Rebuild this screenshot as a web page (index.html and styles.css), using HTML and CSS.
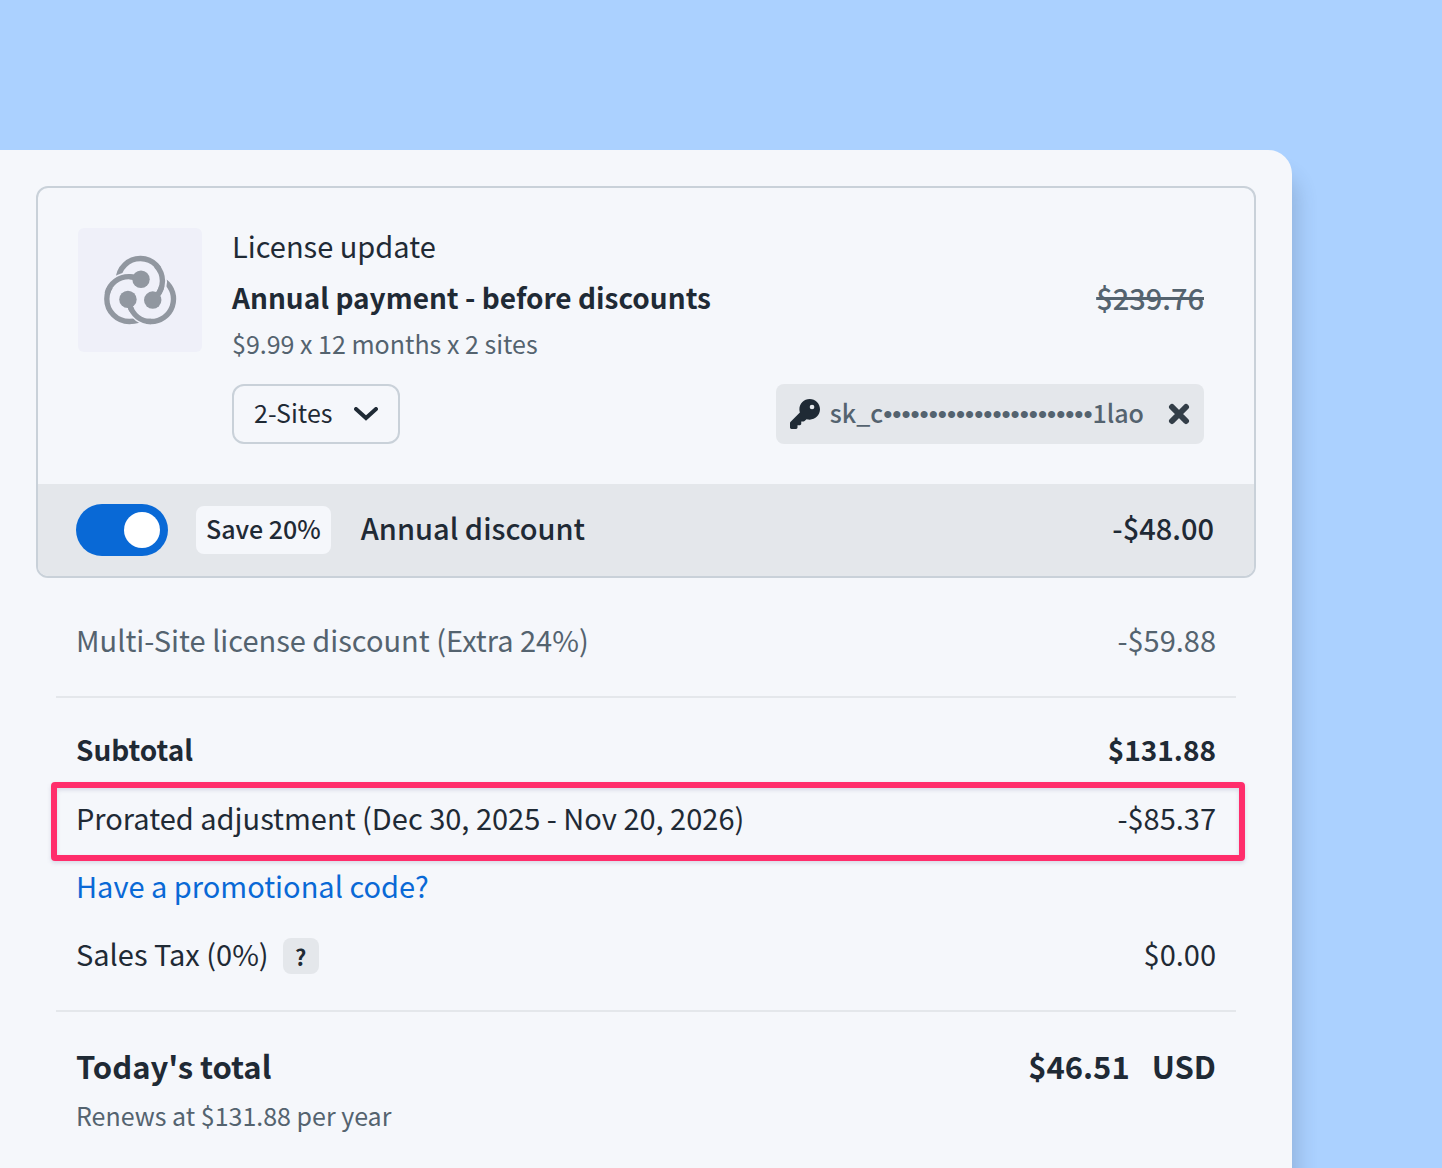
FILE: index.html
```html
<!DOCTYPE html>
<html lang="en">
<head>
  <meta charset="UTF-8">
  <meta name="viewport" content="width=device-width, initial-scale=1.0">
  <title>License update</title>
  <link rel="stylesheet" href="styles.css">
</head>
<body>
  <main class="panel">
    <section class="card">
      <div class="product">
        <svg class="logo" viewBox="25 25 370 370" aria-hidden="true">
          <g class="logo-ring">
            <path d="M145 181 A66 66 0 0 1 277 183 Q276 210 260 228"/>
            <path d="M205 178 Q192 170 178 170 A67 67 0 0 0 178 304 Q194 304 206 300"/>
            <path d="M179 255 C188 285 212 304 243 304 A67 67 0 0 0 284 184"/>
          </g>
          <!-- gaps where the rings cross -->
          <g class="logo-gap">
            <path d="M122 200 A67 67 0 0 1 178 170"/>
            <path d="M266 147 A66 66 0 0 1 276 198"/>
            <path d="M186 270 Q203 297 230 303"/>
          </g>
          <g class="logo-ring">
            <path d="M112 220 A67 67 0 0 1 178 170 Q192 170 205 178"/>
            <path d="M258 137 A66 66 0 0 1 277 183 Q276 210 260 228"/>
            <path d="M179 255 C188 285 212 304 243 304"/>
          </g>
          <g class="logo-dots">
            <circle cx="213" cy="178" r="26"/>
            <circle cx="174" cy="238" r="26"/>
            <circle cx="248" cy="240" r="26"/>
          </g>
        </svg>
        <div class="details">
          <p class="product-name">License update</p>
          <div class="price-row">
            <h2>Annual payment - before discounts</h2>
            <s>$239.76</s>
          </div>
          <p class="note">$9.99 x 12 months x 2 sites</p>
          <div class="controls">
            <div class="select">
              <select aria-label="Number of sites">
                <option>2-Sites</option>
              </select>
              <svg class="chevron" viewBox="0 0 24 14" aria-hidden="true"><path d="M2 2 L12 11 L22 2"/></svg>
            </div>
            <div class="license-key">
              <svg class="key-icon" viewBox="0 0 512 512" aria-hidden="true"><path d="M336 352c97.200 0 176-78.800 176-176S433.200 0 336 0S160 78.800 160 176c0 18.700 2.900 36.800 8.300 53.700L7 391c-4.500 4.500-7 10.600-7 17v80c0 13.300 10.700 24 24 24h80c13.300 0 24-10.700 24-24V448h40c13.300 0 24-10.700 24-24V384h40c6.400 0 12.500-2.500 17-7l33.300-33.300c16.900 5.400 35 8.300 53.700 8.300zM376 96a40 40 0 1 1 0 80 40 40 0 1 1 0-80z"/></svg>
              <span class="key-text">sk_c<span class="mask">•••••••••••••••••••••••</span>1lao</span>
              <button type="button" class="remove" aria-label="Remove license key">
                <svg viewBox="0 0 22 22" aria-hidden="true"><path d="M4 4 L18 18 M18 4 L4 18"/></svg>
              </button>
            </div>
          </div>
        </div>
      </div>
      <div class="discount">
        <input type="checkbox" class="toggle" id="annual" checked>
        <span class="badge">Save 20%</span>
        <label for="annual">Annual discount</label>
        <span class="amount">-$48.00</span>
      </div>
    </section>

    <section class="summary">
      <div class="row muted"><span>Multi-Site license discount (Extra 24%)</span><span>-$59.88</span></div>
      <hr>
      <div class="row strong"><span>Subtotal</span><span>$131.88</span></div>
      <div class="row highlight"><span>Prorated adjustment (Dec 30, 2025 - Nov 20, 2026)</span><span>-$85.37</span></div>
      <div class="row"><a href="#promo">Have a promotional code?</a></div>
      <div class="row">
        <span class="tax">Sales Tax (0%) <button type="button" class="help" aria-label="About sales tax">?</button></span>
        <span>$0.00</span>
      </div>
      <hr>
      <div class="row total">
        <span>Today's total</span>
        <span class="total-amount"><span>$46.51</span><span>USD</span></span>
      </div>
      <p class="note renews">Renews at $131.88 per year</p>
    </section>
  </main>
</body>
</html>
```
FILE: styles.css
```css
* {
  box-sizing: border-box;
}
body {
  margin: 0;
  padding-top: 150px;
  min-height: 100vh;
  display: flex;
  background: #abd1ff;
  color: #1f2a35;
  font-family: "Noto Sans CJK SC", "Noto Sans", sans-serif;
  font-size: 29px;
  line-height: 40px;
  overflow: hidden;
}
h2, p {
  margin: 0;
  font-size: inherit;
}
.panel {
  flex: 1;
  margin-right: 150px;
  padding: 36px 36px 24px;
  background: #f5f7fb;
  border-top-right-radius: 24px;
  box-shadow: 6px 24px 20px rgba(50, 65, 90, 0.2);
}
.card {
  border: 2px solid #c9d1d9;
  border-radius: 12px;
  overflow: hidden;
}
.product {
  display: flex;
  align-items: flex-start;
  gap: 30px;
  padding: 40px 50px 40px 40px;
}
.logo {
  width: 124px;
  height: 124px;
  flex-shrink: 0;
  border-radius: 6px;
  background: #eff0f9;
}
.logo-ring, .logo-gap {
  fill: none;
  stroke: #9197a0;
  stroke-width: 16;
}
.logo-gap {
  stroke: #eff0f9;
  stroke-width: 26;
}
.logo-dots {
  fill: #9197a0;
}
.details {
  flex: 1;
}
.product-name {
  line-height: 34px;
}
.price-row {
  display: flex;
  justify-content: space-between;
  margin-top: 15px;
}
.price-row h2 {
  font-size: 28px;
  font-weight: 700;
}
.price-row s {
  color: #54636f;
  font-weight: 500;
  text-decoration-thickness: 3px;
}
.note {
  color: #54636f;
  font-size: 25px;
  line-height: 36px;
}
.price-row + .note {
  margin-top: 8px;
}
.controls {
  display: flex;
  justify-content: space-between;
  margin-top: 23px;
}
.select {
  position: relative;
}
select {
  appearance: none;
  width: 168px;
  height: 60px;
  padding: 0 20px 4px;
  border: 2px solid #c9d1d9;
  border-radius: 12px;
  background: transparent;
  color: inherit;
  font-family: inherit;
  font-size: 25px;
}
.chevron {
  position: absolute;
  top: 23px;
  right: 22px;
  width: 24px;
  height: 14px;
  pointer-events: none;
  fill: none;
  stroke: #1f2a35;
  stroke-width: 4;
  stroke-linecap: round;
}
.license-key {
  display: flex;
  align-items: center;
  height: 60px;
  padding: 0 14px;
  border-radius: 8px;
  background: #e4e7eb;
  color: #54636f;
  font-size: 25px;
  font-weight: 500;
}
.key-icon {
  width: 30px;
  height: 30px;
  margin-right: 10px;
  fill: #1f2a35;
}
.key-text {
  padding-bottom: 2px;
}
.mask {
  font-family: "Liberation Sans", Arial, sans-serif;
  font-size: 26px;
}
button {
  border: 0;
  padding: 0;
  background: none;
  color: inherit;
  font-family: inherit;
  cursor: pointer;
}
.remove {
  display: flex;
  margin-left: 24px;
}
.remove svg {
  width: 22px;
  height: 22px;
  stroke: #333e48;
  stroke-width: 6;
  stroke-linecap: round;
}
.discount {
  display: flex;
  align-items: center;
  padding: 20px 40px 20px 38px;
  background: #e4e7eb;
  font-weight: 500;
}
.discount label, .amount {
  padding-bottom: 6px;
}
.toggle {
  appearance: none;
  width: 92px;
  height: 52px;
  margin: 0 28px 0 0;
  padding: 8px;
  display: flex;
  border-radius: 26px;
  background: #8c96a0;
}
.toggle::before {
  content: "";
  width: 36px;
  height: 36px;
  border-radius: 50%;
  background: #fff;
}
.toggle:checked {
  justify-content: flex-end;
  background: #0969d6;
}
.badge {
  margin-right: 30px;
  padding: 2px 10px 6px;
  border-radius: 8px;
  background: #f5f7fb;
  font-size: 25px;
}
.amount {
  margin-left: auto;
}
.summary {
  padding: 30px 20px 0;
}
hr {
  height: 2px;
  margin: 20px 0;
  border: 0;
  background: #e4e7eb;
}
.row {
  position: relative;
  display: flex;
  justify-content: space-between;
  padding: 11px 20px 17px;
}
.muted {
  color: #54636f;
}
.strong {
  font-size: 28px;
  font-weight: 700;
}
.highlight::after {
  content: "";
  position: absolute;
  inset: -4px -9px -7px -5px;
  border: 6px solid #ff2d6b;
  border-radius: 4px;
  filter: drop-shadow(0 2px 2px rgba(60, 60, 120, 0.16));
}
a {
  color: #0969d6;
  text-decoration: none;
}
.tax {
  display: flex;
  align-items: center;
  gap: 14px;
}
.help {
  width: 36px;
  height: 36px;
  margin-top: 6px;
  border-radius: 8px;
  background: #e4e7eb;
  font-size: 22px;
  font-weight: 700;
  line-height: 34px;
}
/* keep the row as tall as its text */
.tax {
  height: 40px;
}
.total {
  padding: 14px 20px 11px;
  font-size: 31px;
  font-weight: 700;
}
.total-amount {
  display: flex;
  gap: 22px;
}
.renews {
  padding: 0 20px;
}
```
